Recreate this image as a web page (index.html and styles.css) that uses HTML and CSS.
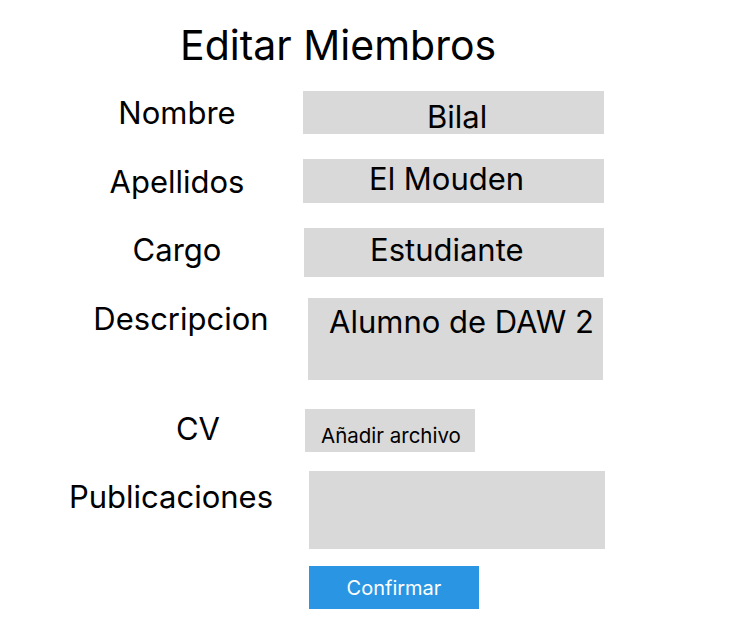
FILE: index.html
```html
<!DOCTYPE html>
<html lang="es">
<head>
<meta charset="utf-8">
<title>Editar Miembros</title>
<link rel="stylesheet" href="styles.css">
</head>
<body>
<main class="page">
  <h1 class="title">Editar Miembros</h1>
  <form class="form">
    <div class="row row-nombre">
      <span class="label">Nombre</span>
      <div class="field field-nombre">Bilal</div>
    </div>
    <div class="row row-apellidos">
      <span class="label">Apellidos</span>
      <div class="field field-apellidos">El Mouden</div>
    </div>
    <div class="row row-cargo">
      <span class="label">Cargo</span>
      <div class="field field-cargo">Estudiante</div>
    </div>
    <div class="row row-desc">
      <span class="label label-desc">Descripcion</span>
      <div class="field field-desc">Alumno de DAW 2</div>
    </div>
    <div class="row row-cv">
      <span class="label label-cv">CV</span>
      <div class="file-btn">Añadir archivo</div>
    </div>
    <div class="row row-pub">
      <span class="label label-pub">Publicaciones</span>
      <div class="field field-pub"></div>
    </div>
    <div class="row row-submit">
      <button type="button" class="confirm">Confirmar</button>
    </div>
  </form>
</main>
</body>
</html>
```

FILE: styles.css
```css
* { box-sizing: border-box; }

html, body {
  margin: 0;
  padding: 0;
  background: #ffffff;
}

body {
  font-family: Inter, "Noto Sans", sans-serif;
  color: #000000;
  width: 750px;
  height: 622px;
  overflow: hidden;
}

.title {
  margin: 20px 0 0 0;
  padding-left: 180px;
  font-size: 41px;
  font-weight: 400;
  line-height: 50px;
}

.form {
  display: flex;
  flex-direction: column;
}

.row {
  display: flex;
  align-items: flex-start;
}

.label {
  width: 250px;
  margin-left: 52px;
  text-align: center;
  font-size: 31px;
  line-height: 37px;
}

.field {
  background: #d9d9d9;
  font-size: 31px;
  line-height: 37px;
  white-space: nowrap;
}

/* Nombre */
.row-nombre { margin-top: 21px; }
.row-nombre .label { margin-top: 3px; }
.field-nombre {
  margin-left: 1px;
  width: 301px;
  height: 43px;
  padding: 7px 0 0 124px;
}

/* Apellidos */
.row-apellidos { margin-top: 25px; }
.row-apellidos .label { margin-top: 4px; }
.field-apellidos {
  margin-left: 1px;
  width: 301px;
  height: 44px;
  padding: 1px 0 0 66px;
}

/* Cargo */
.row-cargo { margin-top: 25px; }
.row-cargo .label { margin-top: 3px; }
.field-cargo {
  margin-left: 2px;
  width: 300px;
  height: 49px;
  padding: 3px 0 0 66px;
}

/* Descripcion */
.row-desc { margin-top: 21px; }
.label-desc { margin-top: 2px; padding-left: 8px; }
.field-desc {
  margin-left: 6px;
  width: 295px;
  height: 82px;
  padding: 5px 0 0 21px;
}

/* CV */
.row-cv { margin-top: 29px; }
.label-cv { margin-top: 1px; padding-left: 42px; }
.file-btn {
  margin-left: 3px;
  width: 170px;
  height: 43px;
  background: #d9d9d9;
  font-size: 20.5px;
  line-height: 25px;
  padding: 14px 0 0 16px;
  white-space: nowrap;
}

/* Publicaciones */
.row-pub { margin-top: 19px; }
.label-pub { margin-top: 7px; padding-right: 12px; }
.field-pub {
  margin-left: 7px;
  width: 296px;
  height: 78px;
}

/* Confirmar */
.row-submit { margin-top: 17px; }
.confirm {
  margin-left: 309px;
  width: 170px;
  height: 43px;
  border: 0;
  padding: 0;
  background: #2a96e3;
  color: #ffffff;
  font-family: Inter, "Noto Sans", sans-serif;
  font-size: 20px;
  line-height: 24px;
}
```
